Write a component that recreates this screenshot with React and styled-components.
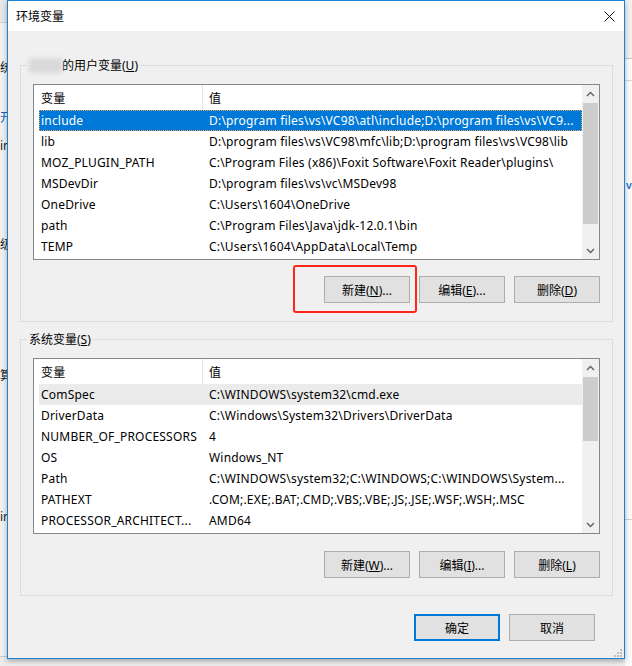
import React from "react";
import styled, { createGlobalStyle, css } from "styled-components";

const FONT = `"Noto Sans", "Noto Sans CJK SC", sans-serif`;

const GlobalStyle = createGlobalStyle`
  html, body { margin: 0; padding: 0; }
  body {
    font-family: ${FONT};
    font-size: 12px;
    color: #000;
    background: #ececec;
    overflow: hidden;
  }
  #root { width: 632px; height: 666px; }
`;

const Desktop = styled.div`
  position: relative;
  width: 632px;
  height: 666px;
  overflow: hidden;
  background: #ececec;
`;

/* window partially hidden behind the dialog (left) */
const BackWindow = styled.div`
  position: absolute;
  left: -53px;
  top: 0;
  width: 60px;
  height: 656px;
  background: #f0f0f0;
  border-bottom: 1px solid #c9c9c9;
  display: flex;
  flex-direction: column;
`;
const BackTitle = styled.div`
  flex: none;
  height: 22px;
  background: #e6e6e6;
  border-bottom: 1px solid #cfcfcf;
`;
const BackText = styled.div`
  flex: none;
  margin-top: ${(p) => p.$gap}px;
  padding-left: 53px;
  height: 16px;
  line-height: 16px;
  white-space: nowrap;
  color: ${(p) => (p.$blue ? "#1a5fb4" : "#1a1a1a")};
`;

/* window partially visible at the right edge */
const RightWindow = styled.div`
  position: absolute;
  left: 625px;
  top: 0;
  width: 7px;
  height: 666px;
  background: #fafafa;
  display: flex;
  flex-direction: column;
`;
const RightBlock = styled.div`
  flex: none;
  height: ${(p) => p.$h}px;
  background: ${(p) => p.$bg || "transparent"};
  border-bottom: 1px solid ${(p) => p.$line || "transparent"};
`;
const RightGlyph = styled.div`
  flex: none;
  padding-left: 1px;
  height: 14px;
  line-height: 14px;
  font-size: 9px;
  font-weight: bold;
  color: #1e6fc8;
`;

const Dialog = styled.section`
  position: absolute;
  left: 7px;
  top: 0;
  width: 618px;
  height: 659px;
  box-sizing: border-box;
  border: 1px solid #1883d7;
  background: #f0f0f0;
  display: flex;
  flex-direction: column;
  box-shadow: 0 2px 5px rgba(0, 0, 0, 0.3);
`;

const TitleBar = styled.header`
  flex: none;
  height: 30px;
  background: #fff;
  display: flex;
  align-items: center;
  justify-content: space-between;
  padding: 0 9px 0 8px;
`;
const Title = styled.span`
  font-size: 12px;
`;

const Body = styled.div`
  flex: 1;
  display: flex;
  flex-direction: column;
  padding: 0 11px 0 12px;
`;

const GroupBox = styled.fieldset`
  margin: ${(p) => p.$mt}px 0 0;
  padding: 10px 12px ${(p) => p.$pb}px;
  border: 1px solid #dcdcdc;
  min-width: 0;
`;
const Legend = styled.legend`
  margin-left: -6px;
  padding: 0 2px;
  line-height: 17px;
  font-size: 12px;
  display: flex;
  align-items: center;
`;
const Redacted = styled.span`
  display: inline-block;
  width: 33px;
  height: 15px;
  background: #d9d9d9;
  filter: blur(2px);
`;

const ListBox = styled.div`
  height: 176px;
  box-sizing: border-box;
  border: 1px solid #828790;
  background: #fff;
  display: flex;
`;
const ListMain = styled.div`
  flex: 1;
  min-width: 0;
  padding-left: 5px;
  display: flex;
  flex-direction: column;
  overflow: hidden;
  letter-spacing: 0.2px;
`;
const HeaderRow = styled.div`
  flex: none;
  display: grid;
  grid-template-columns: 164px 1fr;
  height: 25px;
`;
const HeaderCell = styled.div`
  display: flex;
  align-items: center;
  padding-left: ${(p) => (p.$first ? 2 : 6)}px;
  border-right: 1px solid ${(p) => (p.$first ? "#e5e5e5" : "transparent")};
`;
const Row = styled.div`
  flex: none;
  display: grid;
  grid-template-columns: 164px 1fr;
  height: 21px;
  align-items: center;
  box-sizing: border-box;
  ${(p) =>
    p.$selected &&
    css`
      background: #0078d7;
      color: #fff;
      outline: 1px dotted #f3a15a;
      outline-offset: -1px;
    `}
  ${(p) =>
    p.$hover &&
    css`
      background: #ebebeb;
    `}
`;
const Cell = styled.div`
  padding-left: ${(p) => (p.$first ? 2 : 6)}px;
  white-space: nowrap;
  overflow: hidden;
`;

const ScrollBar = styled.div`
  flex: none;
  width: 17px;
  background: #f0f0f0;
  display: flex;
  flex-direction: column;
`;
const ScrollArrow = styled.div`
  flex: none;
  height: 17px;
  display: flex;
  align-items: center;
  justify-content: center;
`;
const Track = styled.div`
  flex: 1;
  padding: 1px 1px 0;
`;
const Thumb = styled.div`
  height: ${(p) => p.$h}px;
  background: #cdcdcd;
`;

const ButtonRow = styled.div`
  display: flex;
  justify-content: flex-end;
  gap: 9px;
  margin-top: ${(p) => p.$mt}px;
  padding-right: ${(p) => p.$pr || 0}px;
`;
const Button = styled.button`
  position: relative;
  width: 86px;
  height: 27px;
  box-sizing: border-box;
  border: 1px solid #adadad;
  background: #e1e1e1;
  color: #000;
  font-family: ${FONT};
  font-size: 12px;
  padding: 0;
  ${(p) =>
    p.$default &&
    css`
      border: 2px solid #0078d7;
    `}
  ${(p) =>
    p.$marked &&
    css`
      &::after {
        content: "";
        position: absolute;
        left: -32px;
        top: -12px;
        right: -8px;
        bottom: -11px;
        border: 2px solid #ff2619;
        border-radius: 3px;
      }
    `}
`;

const Grip = styled.svg`
  position: absolute;
  right: 2px;
  bottom: 1px;
`;

const Chevron = ({ up }) => (
  <svg width="9" height="6" viewBox="0 0 9 6">
    <polyline
      points={up ? "1,5 4.5,1.5 8,5" : "1,1 4.5,4.5 8,1"}
      fill="none"
      stroke="#606060"
      strokeWidth="1.4"
    />
  </svg>
);

const ListView = ({ rows, thumb }) => (
  <ListBox>
    <ListMain>
      <HeaderRow>
        <HeaderCell $first>变量</HeaderCell>
        <HeaderCell>值</HeaderCell>
      </HeaderRow>
      {rows.map((r) => (
        <Row key={r.name} $selected={r.selected} $hover={r.hover}>
          <Cell $first>{r.name}</Cell>
          <Cell>{r.value}</Cell>
        </Row>
      ))}
    </ListMain>
    <ScrollBar>
      <ScrollArrow>
        <Chevron up />
      </ScrollArrow>
      <Track>
        <Thumb $h={thumb} />
      </Track>
      <ScrollArrow>
        <Chevron />
      </ScrollArrow>
    </ScrollBar>
  </ListBox>
);

const userVars = [
  {
    name: "include",
    value: "D:\\program files\\vs\\VC98\\atl\\include;D:\\program files\\vs\\VC9...",
    selected: true,
  },
  { name: "lib", value: "D:\\program files\\vs\\VC98\\mfc\\lib;D:\\program files\\vs\\VC98\\lib" },
  {
    name: "MOZ_PLUGIN_PATH",
    value: "C:\\Program Files (x86)\\Foxit Software\\Foxit Reader\\plugins\\",
  },
  { name: "MSDevDir", value: "D:\\program files\\vs\\vc\\MSDev98" },
  { name: "OneDrive", value: "C:\\Users\\1604\\OneDrive" },
  { name: "path", value: "C:\\Program Files\\Java\\jdk-12.0.1\\bin" },
  { name: "TEMP", value: "C:\\Users\\1604\\AppData\\Local\\Temp" },
];

const sysVars = [
  { name: "ComSpec", value: "C:\\WINDOWS\\system32\\cmd.exe", hover: true },
  { name: "DriverData", value: "C:\\Windows\\System32\\Drivers\\DriverData" },
  { name: "NUMBER_OF_PROCESSORS", value: "4" },
  { name: "OS", value: "Windows_NT" },
  { name: "Path", value: "C:\\WINDOWS\\system32;C:\\WINDOWS;C:\\WINDOWS\\System..." },
  { name: "PATHEXT", value: ".COM;.EXE;.BAT;.CMD;.VBS;.VBE;.JS;.JSE;.WSF;.WSH;.MSC" },
  { name: "PROCESSOR_ARCHITECT...", value: "AMD64" },
];

export default function App() {
  return (
    <Desktop>
      <GlobalStyle />
      <BackWindow>
        <BackTitle />
        <BackText $gap={37}>统计</BackText>
        <BackText $gap={34} $blue>开发</BackText>
        <BackText $gap={12}>in</BackText>
        <BackText $gap={83}>级别</BackText>
        <BackText $gap={115}>算法</BackText>
        <BackText $gap={125}>ir</BackText>
      </BackWindow>
      <RightWindow>
        <RightBlock $h={58} $bg="#f0f0f0" $line="#c6c6c6" />
        <RightBlock $h={21} $line="#d6d6d6" />
        <RightBlock $h={97} />
        <RightGlyph>V</RightGlyph>
        <RightBlock $h={326} $line="#cfcfcf" />
      </RightWindow>

      <Dialog>
        <TitleBar>
          <Title>环境变量</Title>
          <svg width="11" height="11" viewBox="0 0 11 11">
            <path d="M0.5 0.5 L10.5 10.5 M10.5 0.5 L0.5 10.5" stroke="#111" strokeWidth="1" />
          </svg>
        </TitleBar>
        <Body>
          <GroupBox $mt={26} $pb={18}>
            <Legend>
              <Redacted />
              的用户变量(<u>U</u>)
            </Legend>
            <ListView rows={userVars} thumb={121} />
            <ButtonRow $mt={16}>
              <Button $marked>
                新建(<u>N</u>)...
              </Button>
              <Button>
                编辑(<u>E</u>)...
              </Button>
              <Button>
                删除(<u>D</u>)
              </Button>
            </ButtonRow>
          </GroupBox>

          <GroupBox $mt={9} $pb={17}>
            <Legend>
              系统变量(<u>S</u>)
            </Legend>
            <ListView rows={sysVars} thumb={64} />
            <ButtonRow $mt={17}>
              <Button>
                新建(<u>W</u>)...
              </Button>
              <Button>
                编辑(<u>I</u>)...
              </Button>
              <Button>
                删除(<u>L</u>)
              </Button>
            </ButtonRow>
          </GroupBox>

          <ButtonRow $mt={18} $pr={18}>
            <Button $default>确定</Button>
            <Button>取消</Button>
          </ButtonRow>
        </Body>
        <Grip width="8" height="8" viewBox="0 0 8 8">
          <rect x="6" y="0" width="2" height="2" fill="#bdbdbd" />
          <rect x="3" y="3" width="2" height="2" fill="#bdbdbd" />
          <rect x="6" y="3" width="2" height="2" fill="#bdbdbd" />
          <rect x="0" y="6" width="2" height="2" fill="#bdbdbd" />
          <rect x="3" y="6" width="2" height="2" fill="#bdbdbd" />
          <rect x="6" y="6" width="2" height="2" fill="#bdbdbd" />
        </Grip>
      </Dialog>
    </Desktop>
  );
}
